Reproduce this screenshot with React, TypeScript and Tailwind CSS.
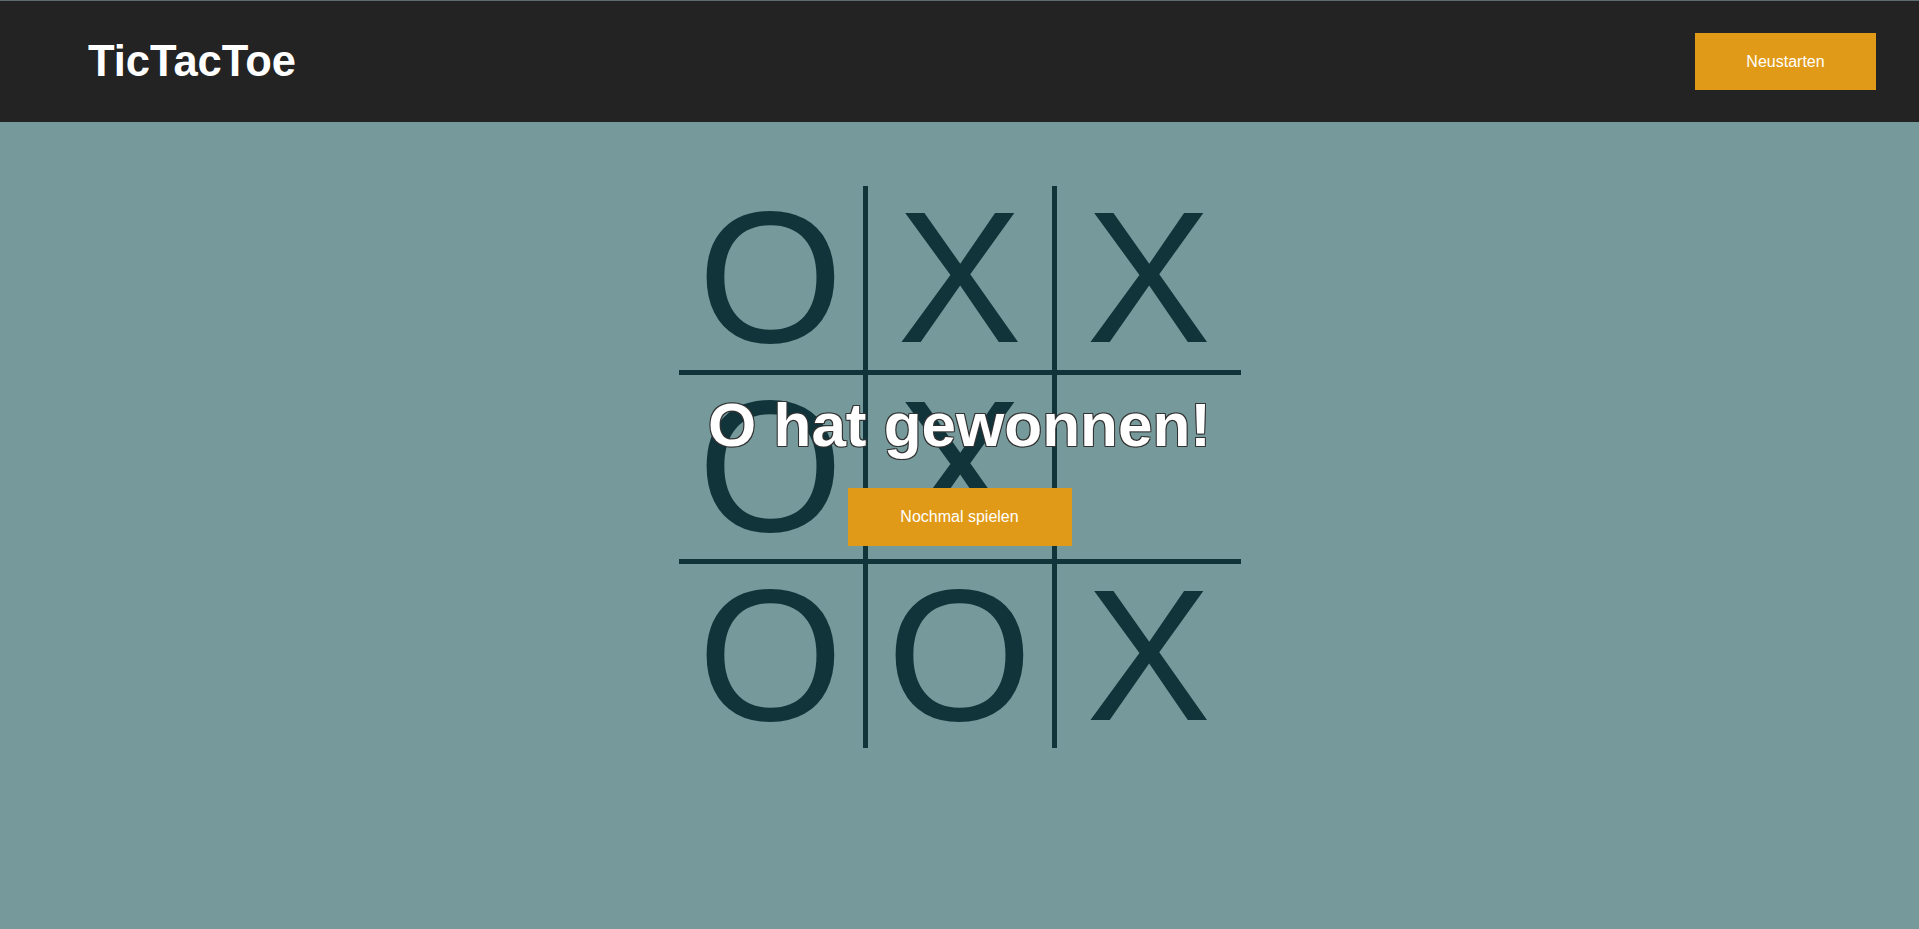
import React, { useState } from "react";

type Cell = "X" | "O" | "";

const initialBoard: Cell[] = ["O", "X", "X", "O", "X", "", "O", "O", "X"];

export default function App() {
  const [board, setBoard] = useState<Cell[]>(initialBoard);
  const [winner, setWinner] = useState<Cell>("O");

  const restart = () => {
    setBoard(Array(9).fill("") as Cell[]);
    setWinner("");
  };

  return (
    <div className="min-h-screen bg-[#769a9c] border-t border-[#5c6c72] font-['Liberation_Sans',Arial,sans-serif]">
      <header className="h-[121px] bg-[#232323] flex items-center justify-between pl-[88px] pr-[43px]">
        <h1 className="text-[43.5px] font-bold text-white leading-none">TicTacToe</h1>
        <button
          type="button"
          onClick={restart}
          className="w-[181px] h-[57px] bg-[#e09a17] text-white text-[16px]"
        >
          Neustarten
        </button>
      </header>

      <main className="flex justify-center pt-[64px]">
        <div className="relative">
          <div className="grid grid-cols-3 gap-[5px] bg-[#10343a] w-[562px]">
            {board.map((cell, i) => (
              <div
                key={i}
                className="h-[184px] bg-[#769a9c] flex items-center justify-center text-[187px] leading-normal text-[#10343a]"
              >
                {cell}
              </div>
            ))}
          </div>

          {winner && (
            <div className="absolute inset-0 flex flex-col items-center justify-center gap-[17px] pb-[10px]">
              <h2 className="text-[62px] font-bold text-white leading-normal [text-shadow:1px_1px_0_#333,-1px_-1px_0_#333,1px_-1px_0_#333,-1px_1px_0_#333]">
                {winner} hat gewonnen!
              </h2>
              <button
                type="button"
                onClick={restart}
                className="w-[224px] h-[58px] bg-[#e09a17] text-white text-[16px]"
              >
                Nochmal spielen
              </button>
            </div>
          )}
        </div>
      </main>
    </div>
  );
}
